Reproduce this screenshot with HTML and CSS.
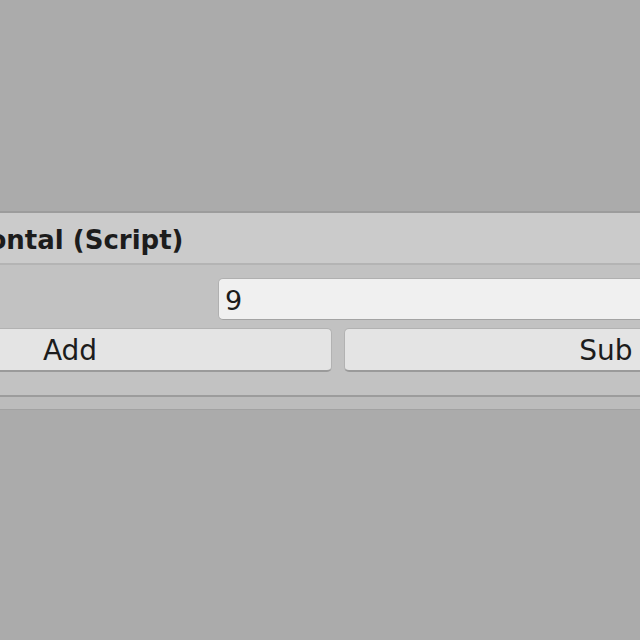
FILE: index.html
```html
<!DOCTYPE html>
<html lang="en">
<head>
    <meta charset="UTF-8">
    <meta name="viewport" content="width=device-width, initial-scale=1.0">
    <title>Horizontal (Script)</title>
    <link rel="stylesheet" href="styles.css">
</head>
<body>

    <div class="inspector">
        <div class="component">
            <div class="component-header">
                <span class="component-title">Horizontal (Script)</span>
            </div>
            <div class="component-body">
                <div class="field-row">
                    <label class="field-label" for="valor">Value</label>
                    <input class="field-input" type="text" id="valor" value="9">
                </div>
                <div class="button-row">
                    <button class="unity-button" type="button">Add</button>
                    <button class="unity-button" type="button">Sub</button>
                </div>
            </div>
        </div>
        <div class="component-footer"></div>
    </div>

</body>
</html>
```

FILE: styles.css
```css
html, body {
    margin: 0;
    height: 100%;
    overflow: hidden;
}

body {
    font-family: "DejaVu Sans", Verdana, sans-serif;
    background-color: #ababab;
    color: #1c1c1c;
}

.inspector {
    width: 1076px;
    margin-left: -200px;
    padding-top: 211px;
}

.component {
    border-top: 2px solid #9c9c9c;
    background-color: #c2c2c2;
}

.component-header {
    display: flex;
    align-items: center;
    height: 52px;
    box-sizing: border-box;
    padding-left: 112px;
    padding-top: 3px;
    background-color: #cbcbcb;
    border-bottom: 2px solid #b4b4b4;
}

.component-title {
    font-size: 26px;
    font-weight: 700;
    white-space: nowrap;
}

.component-body {
    padding: 13px 8px 23px 8px;
}

.field-row {
    display: flex;
    align-items: center;
    height: 42px;
    margin-bottom: 8px;
}

.field-label {
    width: 410px;
    flex-shrink: 0;
    visibility: hidden;
}

.field-input {
    flex: 1;
    height: 42px;
    box-sizing: border-box;
    padding: 2px 6px 0 6px;
    font-family: inherit;
    font-size: 27px;
    color: #1c1c1c;
    background-color: #f0f0f0;
    border: 1px solid #b0b0b0;
    border-bottom-color: #a3a3a3;
    border-radius: 5px;
    outline: none;
}

.button-row {
    display: flex;
    gap: 12px;
}

.unity-button {
    flex: 1;
    height: 44px;
    font-family: inherit;
    font-size: 28px;
    color: #1c1c1c;
    background-color: #e4e4e4;
    border: 1px solid #b2b2b2;
    border-bottom: 2px solid #9a9a9a;
    border-radius: 5px;
    padding: 2px 0 0 0;
}

.component-footer {
    border-top: 2px solid #9c9c9c;
    border-bottom: 1px solid #a2a2a2;
    height: 12px;
    background-color: #bcbcbc;
}
```
